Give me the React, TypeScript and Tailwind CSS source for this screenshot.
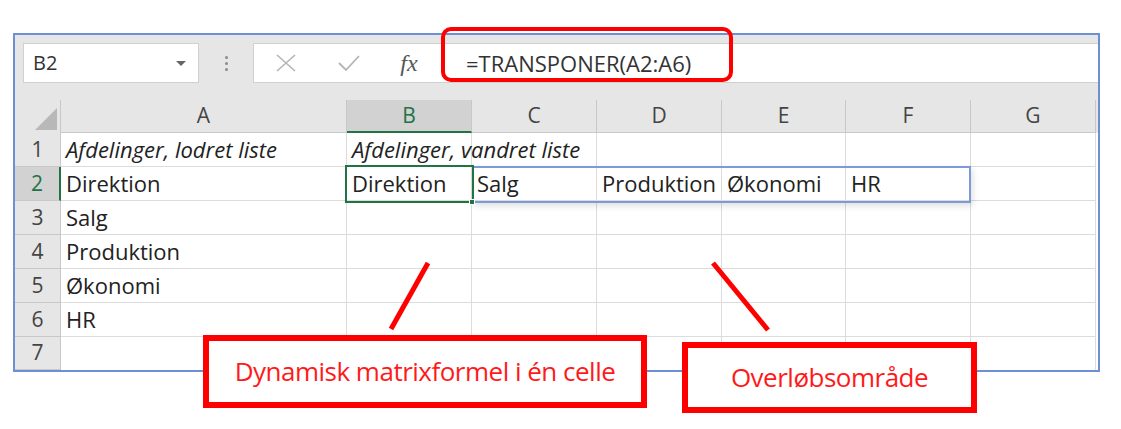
import React from 'react'

const cols = [
  { key: 'A', w: 'w-[286px]' },
  { key: 'B', w: 'w-[125px]' },
  { key: 'C', w: 'w-[125px]' },
  { key: 'D', w: 'w-[125px]' },
  { key: 'E', w: 'w-[124px]' },
  { key: 'F', w: 'w-[125px]' },
  { key: 'G', w: 'w-[125px]' },
]

const rows: string[][] = [
  ['Afdelinger, lodret liste', 'Afdelinger, vandret liste', '', '', '', '', ''],
  ['Direktion', 'Direktion', 'Salg', 'Produktion', 'Økonomi', 'HR', ''],
  ['Salg', '', '', '', '', '', ''],
  ['Produktion', '', '', '', '', '', ''],
  ['Økonomi', '', '', '', '', '', ''],
  ['HR', '', '', '', '', '', ''],
  ['', '', '', '', '', '', ''],
]

const font = "font-['Open_Sans','Liberation_Sans',sans-serif]"

export default function App() {
  return (
    <div className={`relative w-[1121px] h-[429px] bg-white overflow-hidden ${font}`}>
      <div className="pt-[33px] pl-[13px]">
        {/* excel vindue */}
        <div className="w-[1087px] border-2 border-[#6d8fd3] bg-white">
          {/* formellinje */}
          <div className="h-[65px] bg-[#e6e6e6] flex items-start pt-[8px] pl-[8px]">
            <div className="w-[176px] h-[40px] bg-white border border-[#d0d0d0] flex items-center justify-between pl-[9px] pr-[12px]">
              <span className="text-[20px] text-[#333]">B2</span>
              <span className="w-0 h-0 border-l-[5px] border-r-[5px] border-t-[5px] border-l-transparent border-r-transparent border-t-[#666]" />
            </div>
            <div className="w-[54px] h-[40px] flex flex-col items-center justify-center gap-[3px]">
              <span className="w-[3px] h-[3px] rounded-full bg-[#8a8a8a]" />
              <span className="w-[3px] h-[3px] rounded-full bg-[#8a8a8a]" />
              <span className="w-[3px] h-[3px] rounded-full bg-[#8a8a8a]" />
            </div>
            <div className="flex-1 h-[40px] bg-white border border-[#d0d0d0] border-r-0 flex items-center">
              <div className="w-[64px] flex justify-center">
                <svg width="22" height="20" viewBox="0 0 22 20">
                  <path d="M2 2 L20 18 M20 2 L2 18" stroke="#b4b4b4" strokeWidth="1.6" fill="none" />
                </svg>
              </div>
              <div className="w-[62px] flex justify-center">
                <svg width="24" height="20" viewBox="0 0 24 20">
                  <path d="M2 10 L9 17 L22 3" stroke="#b4b4b4" strokeWidth="1.8" fill="none" />
                </svg>
              </div>
              <div className="w-[58px] flex justify-center">
                <span className="font-['Liberation_Serif',serif] italic text-[24px] text-[#555]">fx</span>
              </div>
              <span className="ml-[28px] text-[22px] text-[#333]">=TRANSPONER(A2:A6)</span>
            </div>
          </div>

          {/* kolonneoverskrifter */}
          <div className="flex h-[33px] bg-[#e6e6e6]">
            <div className="w-[46px] h-full relative border-r border-[#c8c8c8]">
              <svg className="absolute right-[3px] bottom-[3px]" width="22" height="22" viewBox="0 0 22 22">
                <path d="M22 0 L22 22 L0 22 Z" fill="#b8b8b8" />
              </svg>
            </div>
            {cols.map((c) => (
              <div
                key={c.key}
                className={`${c.w} h-full flex items-center justify-center border-r border-[#c8c8c8] text-[21px] ${
                  c.key === 'B'
                    ? 'bg-[#d2d2d2] text-[#217346] border-b-2 border-b-[#217346]'
                    : 'text-[#444] border-b border-b-[#c8c8c8]'
                }`}
              >
                {c.key}
              </div>
            ))}
          </div>

          {/* rækker */}
          {rows.map((r, i) => (
            <div key={i} className={`flex ${i === 6 ? 'h-[33px]' : 'h-[34px]'}`}>
              <div
                className={`w-[46px] h-full flex items-center justify-center text-[21px] border-b border-[#c8c8c8] ${
                  i === 1
                    ? 'bg-[#d2d2d2] text-[#217346] border-r-2 border-r-[#217346]'
                    : 'bg-[#e6e6e6] text-[#444] border-r border-r-[#c8c8c8]'
                }`}
              >
                {i + 1}
              </div>
              {r.map((v, j) => (
                <div
                  key={j}
                  className={`${cols[j].w} h-full flex items-center pl-[5px] border-r border-b border-[#dcdcdc] text-[22px] text-[#222] whitespace-nowrap overflow-visible ${
                    i === 0 ? 'italic' : ''
                  } ${i === 6 ? 'border-b-0' : ''}`}
                >
                  {v}
                </div>
              ))}
            </div>
          ))}
        </div>
      </div>

      {/* overløbsområde og aktiv celle */}
      <div className="absolute left-[472px] top-[166px] w-[499px] h-[37px] border-2 border-[#7c9ad6] shadow-[2px_3px_6px_rgba(0,0,0,0.12)]" />
      <div className="absolute left-[345px] top-[165px] w-[129px] h-[38px] border-2 border-[#217346]" />
      <div className="absolute left-[469px] top-[199px] w-[6px] h-[6px] bg-[#217346] border border-white" />

      {/* markering af formel */}
      <div className="absolute left-[441px] top-[27px] w-[292px] h-[55px] border-[4px] border-[#ff0000] rounded-[10px]" />

      {/* pile */}
      <svg className="absolute left-0 top-0" width="1121" height="429" viewBox="0 0 1121 429">
        <line x1="428" y1="263" x2="391" y2="329" stroke="#ff0000" strokeWidth="5" />
        <line x1="713" y1="263" x2="768" y2="330" stroke="#ff0000" strokeWidth="5" />
      </svg>

      {/* forklaringer */}
      <div className="absolute left-[203px] top-[335px] w-[444px] h-[73px] border-[6px] border-[#ff0000] bg-white flex items-center justify-center">
        <span className="text-[26px] text-[#ff1a1a] tracking-[-0.5px]">Dynamisk matrixformel i én celle</span>
      </div>
      <div className="absolute left-[682px] top-[342px] w-[295px] h-[71px] border-[6px] border-[#ff0000] bg-white flex items-center justify-center">
        <span className="text-[26px] text-[#ff1a1a] tracking-[-0.5px]">Overløbsområde</span>
      </div>
    </div>
  )
}
